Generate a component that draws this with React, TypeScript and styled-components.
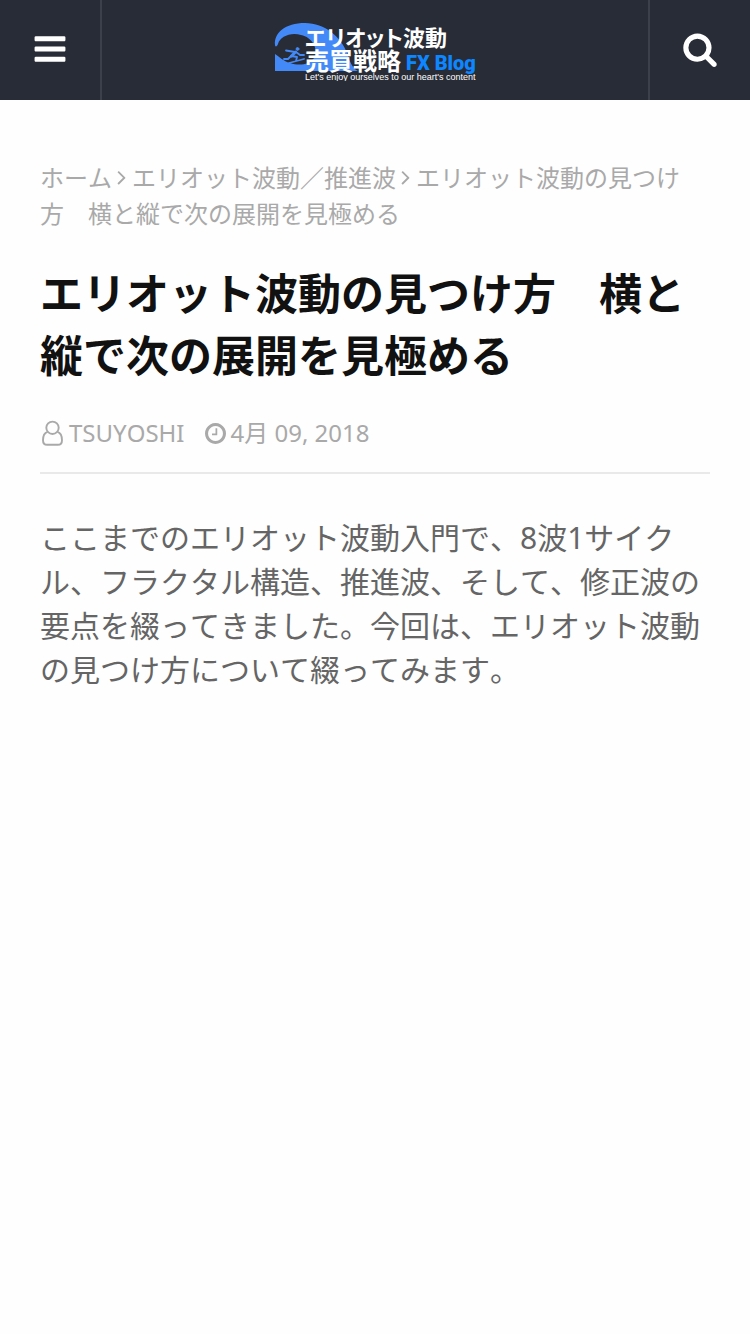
import React from "react";
import styled, { createGlobalStyle } from "styled-components";

const GlobalStyle = createGlobalStyle`
  *, *::before, *::after { box-sizing: border-box; }
  body {
    margin: 0;
    background: #fefefe;
    color: #656565;
    font-family: "Noto Sans", "Noto Sans CJK JP", sans-serif;
    font-size: 24px;
    font-kerning: none;
    text-spacing-trim: space-all;
  }
`;

const Header = styled.header`
  display: flex;
  height: 100px;
  background: #282c37;
`;

const HeaderButton = styled.button<{ $side: "left" | "right" }>`
  display: flex;
  align-items: center;
  justify-content: center;
  flex: none;
  width: 102px;
  padding: 0 0 2px;
  border: 0 solid #3c404a;
  border-width: ${(p) => (p.$side === "left" ? "0 2px 0 0" : "0 0 0 2px")};
  background: none;
  color: #fff;
  cursor: pointer;
`;

const LogoLink = styled.a`
  display: flex;
  flex: 1;
  align-items: center;
  justify-content: center;
`;

const LogoText = styled.text<{ $size: number }>`
  font-family: "Liberation Sans", "Noto Sans CJK JP", sans-serif;
  font-size: ${(p) => p.$size}px;
  font-weight: 700;
  font-feature-settings: "palt";
  fill: #fff;
`;

const LogoAccent = styled.text`
  font-family: Roboto, "Liberation Sans", sans-serif;
  font-size: 20px;
  font-weight: 900;
  fill: #0d86ff;
`;

const LogoTagline = styled.text`
  font-family: "Liberation Sans", sans-serif;
  font-size: 9px;
  fill: #fff;
`;

const Main = styled.main`
  padding: 60px 40px;
`;

const Breadcrumb = styled.nav`
  color: #a9a9a9;
  line-height: 36px;

  a {
    color: inherit;
    text-decoration: none;
  }

  svg {
    margin: 0 6px 0 5px;
    vertical-align: -2px;
  }
`;

const NoBreak = styled.span`
  white-space: nowrap;
`;

const Title = styled.h1`
  margin: 31px 0 0;
  color: #111;
  font-size: 43px;
  font-weight: 700;
  line-height: 62px;
`;

const Meta = styled.div`
  display: flex;
  gap: 20px;
  margin-top: 28px;
  padding-bottom: 21px;
  border-bottom: 2px solid #e9e9e9;
  color: #a9a9a9;
  line-height: 36px;
`;

const MetaItem = styled.span`
  display: flex;
  align-items: center;
  gap: 5px;
`;

const Body = styled.p`
  margin: 42px 0 0;
  font-size: 30px;
  line-height: 44px;
`;

type GlyphProps = { size: number; d: string; width?: number; x?: number };

const Glyph = ({ size, d, width = 1792, x = 0 }: GlyphProps) => (
  <svg
    width={Math.round((size * width) / 1792)}
    height={size}
    viewBox={`${x} 0 ${width} 1792`}
    fill="currentColor"
    aria-hidden="true"
  >
    <path d={d} />
  </svg>
);

const BARS =
  "M1664 1344v128q0 26-19 45t-45 19h-1408q-26 0-45-19t-19-45v-128q0-26 19-45t45-19h1408q26 0 45 19t19 45zm0-512v128q0 26-19 45t-45 19h-1408q-26 0-45-19t-19-45v-128q0-26 19-45t45-19h1408q26 0 45 19t19 45zm0-512v128q0 26-19 45t-45 19h-1408q-26 0-45-19t-19-45v-128q0-26 19-45t45-19h1408q26 0 45 19t19 45z";
const SEARCH =
  "M1216 832q0-185-131.5-316.5t-316.5-131.5-316.5 131.5-131.5 316.5 131.5 316.5 316.5 131.5 316.5-131.5 131.5-316.5zm512 832q0 52-38 90t-90 38q-54 0-90-38l-343-342q-179 124-399 124-143 0-273.5-55.5t-225-150-150-225-55.5-273.5 55.5-273.5 150-225 225-150 273.5-55.5 273.5 55.5 225 150 150 225 55.5 273.5q0 220-124 399l343 343q37 37 37 90z";
const CLOCK =
  "M1024 544v448q0 14-9 23t-23 9h-320q-14 0-23-9t-9-23v-64q0-14 9-23t23-9h224v-352q0-14 9-23t23-9h64q14 0 23 9t9 23zm416 352q0-148-73-273t-198-198-273-73-273 73-198 198-73 273 73 273 198 198 273 73 273-73 198-198 73-273zm224 0q0 209-103 385.5t-279.5 279.5-385.5 103-385.5-103-279.5-279.5-103-385.5 103-385.5 279.5-279.5 385.5-103 385.5 103 279.5 279.5 103 385.5z";
const ANGLE =
  "M1171 960q0 13-10 23l-466 466q-10 10-23 10t-23-10l-50-50q-10-10-10-23t10-23l393-393-393-393q-10-10-10-23t10-23l50-50q10-10 23-10t23 10l466 466q10 10 10 23z";

const UserIcon = () => (
  <svg width="24" height="26" viewBox="0 0 24 26" fill="none" stroke="currentColor" strokeWidth="1.9" aria-hidden="true">
    <circle cx="12.500" cy="7.8" r="6.2" />
    <path d="M7.500 11.800C4.500 12.700 3 16 3 20.200C3 23.200 4.700 24.800 7.200 24.800H17.800C20.300 24.800 22 23.200 22 20.200C22 16 20.500 12.700 17.500 11.800" />
  </svg>
);

const Separator = () => <Glyph size={24} d={ANGLE} x={560} width={640} />;

const Logo = () => (
  <svg width="204" height="62" viewBox="0 0 204 62" role="img" aria-label="エリオット波動売買戦略 FX Blog">
    <path
      fill="#4489f8"
      d="M2 26C1 14 12 4 32 4C52 4 68 18 74 34C77 43 79 49 85 52H2V35C7 38 10 42 17 44C26 47 36 46 41 39C46 30 39 18 28 16C17 13 7 18 5 25C4 28 2 28 2 26Z"
    />
    <g fill="none" stroke="#4489f8" strokeLinecap="round" strokeLinejoin="round">
      <circle cx="24.5" cy="30" r="1.4" fill="#4489f8" />
      <path strokeWidth="3" d="M22.5 33L18.5 37" />
      <path strokeWidth="1.8" d="M22 33L13 31.500M23 33L27 36H31M18.500 37L24 38L23 42M18 37L15 40H11M16 44L31 40" />
    </g>
    <LogoText $size={22} x="32" y="27">エリオット波動</LogoText>
    <LogoText $size={24} x="32" y="51">売買戦略</LogoText>
    <LogoAccent x="133" y="51">FX Blog</LogoAccent>
    <LogoTagline x="32" y="61">Let's enjoy ourselves to our heart's content</LogoTagline>
  </svg>
);

export default function App() {
  return (
    <>
      <GlobalStyle />
      <Header>
        <HeaderButton $side="left" type="button" aria-label="メニュー">
          <Glyph size={36} d={BARS} />
        </HeaderButton>
        <LogoLink href="#">
          <Logo />
        </LogoLink>
        <HeaderButton $side="right" type="button" aria-label="検索">
          <Glyph size={36} d={SEARCH} />
        </HeaderButton>
      </Header>
      <Main>
        <Breadcrumb>
          <a href="#">ホーム</a>
          <Separator />
          <a href="#">エリオット波動／推進波</a>
          <Separator />
          エリオット波動の見つけ<NoBreak>方　横</NoBreak>と縦で次の展開を見極める
        </Breadcrumb>
        <Title>エリオット波動の見つけ方　横と縦で次の展開を見極める</Title>
        <Meta>
          <MetaItem>
            <UserIcon />
            TSUYOSHI
          </MetaItem>
          <MetaItem>
            <Glyph size={25} d={CLOCK} x={128} width={1536} />
            <time dateTime="2018-04-09">4月 09, 2018</time>
          </MetaItem>
        </Meta>
        <Body>
          ここまでのエリオット波動入門で、8波1サイクル、フラクタル構造、推進波、そして、修正波の要点を綴ってきました。今回は、エリオット波動の見つけ方について綴ってみます。
        </Body>
      </Main>
    </>
  );
}
